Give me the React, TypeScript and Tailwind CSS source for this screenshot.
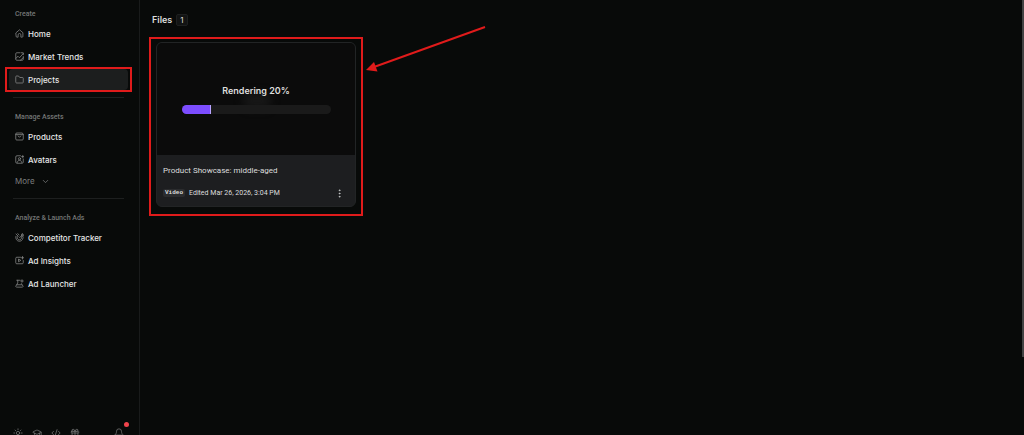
import React from 'react';
import { Bell, ChevronDown, CodeXml, EllipsisVertical, Gift, GraduationCap, Sun } from 'lucide-react';

type IconProps = { className?: string };

const Glyph: React.FC<IconProps & { children: React.ReactNode }> = ({ className, children }) => (
  <svg
    viewBox="0 0 18 18"
    className={className}
    fill="none"
    stroke="currentColor"
    strokeWidth="1.5"
    strokeLinecap="round"
    strokeLinejoin="round"
    aria-hidden="true"
  >
    {children}
  </svg>
);

const HomeIcon = (props: IconProps) => (
  <Glyph {...props}>
    <path d="M2.2 7.4 9 1.6l6.8 5.8v7.4a1.5 1.5 0 0 1-1.5 1.5h-2.5v-4.5a2.8 2.8 0 0 0-5.6 0v4.5H3.7a1.5 1.5 0 0 1-1.500-1.500z" />
  </Glyph>
);

const TrendsIcon = (props: IconProps) => (
  <Glyph {...props}>
    <path d="M10 1.5H3.5a2 2 0 0 0-2 2v11a2 2 0 0 0 2 2h11a2 2 0 0 0 2-2V9" />
    <path d="M1.5 13 6 8.5l3 3L16.5 3M12.5 1.5h4v4M11 16.3l5.5-5" />
  </Glyph>
);

const FolderIcon = (props: IconProps) => (
  <Glyph {...props}>
    <path d="M1.500 3.500a1.500 1.500 0 0 1 1.500-1.500h4l2.500 3H15a1.500 1.500 0 0 1 1.500 1.500v8a1.500 1.500 0 0 1-1.500 1.500H3a1.500 1.500 0 0 1-1.500-1.500z" />
  </Glyph>
);

const ProductIcon = (props: IconProps) => (
  <Glyph {...props}>
    <path d="M3.200 2h11.600l1.700 3V14a2 2 0 0 1-2 2h-11a2 2 0 0 1-2-2V5zM1.500 5.200h15M6 8a3.200 3.200 0 0 0 6 0" />
  </Glyph>
);

const AvatarIcon = (props: IconProps) => (
  <Glyph {...props}>
    <path d="M11 1.5H4a2.5 2.5 0 0 0-2.5 2.5v10A2.5 2.5 0 0 0 4 16.5h10a2.5 2.5 0 0 0 2.500-2.500V8M15.500 1v4.500M13.200 3.200h4.600" />
    <circle cx="9" cy="7.500" r="2.200" />
    <path d="M4.800 14.500c.3-2.700 2-3.800 4.200-3.800s3.900 1.100 4.200 3.800" />
  </Glyph>
);

const TrackerIcon = (props: IconProps) => (
  <Glyph {...props}>
    <path d="M1.800 6.500A7.500 7.500 0 1 0 15.700 6M4.800 7.500a4.400 4.400 0 1 0 8 0M9 9.500l4-4M13 5.500V2.500L15 1v2.500h2.500L16 5.500zM2 2l4.500 4.500M5.500 1.200 8 4" />
  </Glyph>
);

const InsightsIcon = (props: IconProps) => (
  <Glyph {...props}>
    <path d="M11 2.500H3.500a2 2 0 0 0-2 2v9a2 2 0 0 0 2 2h11a2 2 0 0 0 2-2V9M15 1v5M12.500 3.500h5M7 6.800v4.700l4-2.400z" />
  </Glyph>
);

const LauncherIcon = (props: IconProps) => (
  <Glyph {...props}>
    <path d="M3.500 2.500H10M5.500 2.500v5.300L1.800 14a1.500 1.500 0 0 0 1.300 2.300h11.500a1.500 1.500 0 0 0 1.300-2.300l-3-4.800M4 11.500h9M14 1.500v5M11.500 4h5" />
  </Glyph>
);

interface NavItem {
  label: string;
  icon: React.FC<IconProps>;
  active?: boolean;
}

interface NavGroup {
  title: string;
  items: NavItem[];
  more?: boolean;
}

const groups: NavGroup[] = [
  {
    title: 'Create',
    items: [
      { label: 'Home', icon: HomeIcon },
      { label: 'Market Trends', icon: TrendsIcon },
      { label: 'Projects', icon: FolderIcon, active: true },
    ],
  },
  {
    title: 'Manage Assets',
    items: [
      { label: 'Products', icon: ProductIcon },
      { label: 'Avatars', icon: AvatarIcon },
    ],
    more: true,
  },
  {
    title: 'Analyze & Launch Ads',
    items: [
      { label: 'Competitor Tracker', icon: TrackerIcon },
      { label: 'Ad Insights', icon: InsightsIcon },
      { label: 'Ad Launcher', icon: LauncherIcon },
    ],
  },
];

const footerLinks = [
  { label: 'Theme', icon: Sun },
  { label: 'Academy', icon: GraduationCap },
  { label: 'API', icon: CodeXml },
  { label: 'Rewards', icon: Gift },
];

const NavLink: React.FC<{ item: NavItem }> = ({ item }) => {
  const Icon = item.icon;
  return (
    <li className="relative">
      <a
        href="#"
        aria-current={item.active ? 'page' : undefined}
        className={`flex h-[21px] items-center gap-1 rounded px-1.5 text-[8px] font-medium text-[#e6e7e7] ${
          item.active ? 'bg-[#1c1e1e]' : ''
        }`}
      >
        <Icon className="size-[9px] shrink-0 text-[#8b8c8c]" />
        {item.label}
      </a>
      {/* Highlight frame */}
      {item.active && (
        <span className="pointer-events-none absolute -inset-x-1 -inset-y-0.5 border-2 border-[#e01b1b]" />
      )}
    </li>
  );
};

const Sidebar = () => (
  <aside className="flex w-[140px] shrink-0 flex-col border-r border-[#191b1b] pt-2 pr-[11px] pl-[9px]">
    <nav>
      {groups.map((group, i) => (
        <section
          key={group.title}
          className={i > 0 ? 'mt-[7px] before:mx-1 before:mb-[13px] before:block before:h-px before:bg-[#1d1f1f]' : ''}
        >
          <h2 className="px-1.5 font-['Roboto',sans-serif] text-[7px] leading-[12px] font-medium text-[#747676]">
            {group.title}
          </h2>
          <ul className="mt-[3px] flex flex-col gap-0.5">
            {group.items.map((item) => (
              <NavLink key={item.label} item={item} />
            ))}
          </ul>
          {group.more && (
            <button className="mt-0.5 mb-2 flex h-[18px] items-center gap-1.5 px-1.5 text-[8px] text-[#7b7d7d]">
              More
              <ChevronDown className="size-[9px]" />
            </button>
          )}
        </section>
      ))}
    </nav>

    <div className="mt-auto flex h-[7px] items-start gap-[9px] px-1 text-[#777979]">
      {footerLinks.map(({ label, icon: Icon }) => (
        <button key={label} aria-label={label}>
          <Icon className="size-2.5" strokeWidth={1.8} />
        </button>
      ))}
      <button aria-label="Notifications" className="relative ml-auto">
        <Bell className="size-2.5" strokeWidth={1.8} />
        <span className="absolute -top-[6px] -right-[5px] size-[5px] rounded-full bg-[#f0444c]" />
      </button>
    </div>
  </aside>
);

const ProjectCard = () => {
  const progress = 20;
  return (
    <div className="relative w-[200px]">
      <article className="overflow-hidden rounded-md border border-[#222425] bg-[#1d1e20]">
        <div className="relative flex h-28 flex-col items-center bg-[#0b0b0b] pt-[42px]">
          {/* Blurred preview behind the progress */}
          <div className="absolute top-[50px] left-[86px] h-4 w-7 rounded-full bg-[#171717] blur-xs" />
          <p className="relative text-[9px] leading-[12px] font-semibold text-[#dedede]">Rendering {progress}%</p>
          <div
            role="progressbar"
            aria-valuenow={progress}
            aria-valuemin={0}
            aria-valuemax={100}
            className="relative mt-2 h-[9px] w-[149px] overflow-hidden rounded-full bg-[#1a1a1a]"
          >
            <div className="h-full border-r border-[#b9a4ff] bg-[#7c4dff]" style={{ width: `${progress}%` }} />
          </div>
        </div>
        <div className="px-1.5 pt-2.5 pb-1.5 font-['Roboto',sans-serif]">
          <h3 className="text-[8px] leading-[12px] text-[#dcdddd]">Product Showcase: middle-aged</h3>
          <div className="mt-[9px] flex h-[14px] items-center gap-1 text-[7px] text-[#dcdddd]">
            <span className="rounded-xs bg-[#2b2c2e] px-0.5 font-['Liberation_Mono',monospace] text-[6px] leading-[8px] font-bold">
              Video
            </span>
            <span>Edited Mar 26, 2026, 3:04 PM</span>
            <button aria-label="More options" className="mr-1 ml-auto">
              <EllipsisVertical className="size-[11px]" strokeWidth={1.5} />
            </button>
          </div>
        </div>
      </article>

      {/* Highlight frame */}
      <span className="pointer-events-none absolute -inset-x-[7px] -top-[5px] -bottom-[9px] border-2 border-[#e01b1b]" />

      {/* Pointer arrow */}
      <svg
        viewBox="0 0 120 46"
        className="pointer-events-none absolute -top-4 left-[210px] h-[46px] w-[120px]"
        aria-hidden="true"
      >
        <path d="M119 1 8 41" stroke="#e01b1b" strokeWidth="2" />
        <path d="M0 44 8 36l3.500 9.500z" fill="#e01b1b" />
      </svg>
    </div>
  );
};

export default function App() {
  return (
    <div className="relative flex h-screen overflow-hidden bg-[#080a09] font-['Inter',sans-serif]">
      <Sidebar />
      <main className="min-w-0 flex-1 pt-3.5 pl-3">
        <h1 className="flex h-3 items-center gap-1 text-[9px] font-semibold text-[#dcdddd]">
          Files
          <span className="rounded-xs border border-[#1d1f1f] bg-[#121414] px-[3px] text-[8px] leading-[10px] font-normal">
            1
          </span>
        </h1>
        <div className="mt-4 pl-1">
          <ProjectCard />
        </div>
      </main>

      {/* Scrollbar thumb */}
      <div className="absolute top-0 right-0 h-[82%] w-0.5 bg-[#424343]" />
    </div>
  );
}
